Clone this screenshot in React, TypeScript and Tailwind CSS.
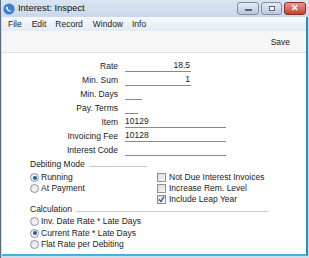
import React from "react";

const font = { fontFamily: '"Liberation Sans", Arial, sans-serif' };

function Radio({ checked }: { checked?: boolean }) {
  return (
    <span className="relative inline-block w-[9px] h-[9px] rounded-full border border-[#8e8f8f] bg-gradient-to-br from-[#e8e8e8] to-[#f8f8f8] shrink-0">
      {checked && (
        <span className="absolute left-[1.5px] top-[1.5px] w-[4px] h-[4px] rounded-full bg-[#1d5fa8]" />
      )}
    </span>
  );
}

function Check({ checked }: { checked?: boolean }) {
  return (
    <span className="relative inline-block w-[9px] h-[9px] border border-[#8e8f8f] bg-gradient-to-br from-[#dcdcdc] to-[#f6f6f6] shrink-0">
      {checked && (
        <svg className="absolute left-0 top-0" width="7" height="7" viewBox="0 0 7 7">
          <path d="M1 3.5 L3 5.5 L6 0.5" stroke="#2a4d8a" strokeWidth="1.3" fill="none" />
        </svg>
      )}
    </span>
  );
}

function Row({ label, width, value, align }: { label: string; width: number; value?: string; align?: "left" | "right" }) {
  return (
    <div className="flex items-end h-[14px]">
      <div className="w-[116px] text-right pr-0 leading-[12px]">{label}</div>
      <div className="ml-[7px] border-b border-[#8a8a8a] h-[13px] leading-[12px] flex items-end" style={{ width }}>
        <span className={"w-full " + (align === "right" ? "text-right pr-[1px]" : "text-left")}>{value}</span>
      </div>
    </div>
  );
}

export default function App() {
  return (
    <div className="w-[309px] h-[258px] bg-[#3b4656] overflow-hidden text-[8.5px] text-[#1a1a1a]" style={font}>
      <div className="w-[309px] h-[258px] flex flex-col border-l border-[#5b6b7e] bg-[#cfdceb]">
        {/* Title bar */}
        <div className="h-[17px] flex items-center bg-gradient-to-b from-[#dbe5f1] to-[#c9d8ea] relative">
          <svg className="ml-[2px]" width="12" height="12" viewBox="0 0 12 12">
            <circle cx="6" cy="6" r="5.6" fill="#3c7fcf" />
            <path d="M3 4 C3 8 7 10 9.5 7.5 C7.5 8.5 4.5 7.5 4.5 3.5 Z" fill="#ffffff" />
          </svg>
          <span className="ml-[3px] text-[9.4px] text-[#111]">Interest: Inspect</span>
          <div className="absolute right-[3px] top-[2px] flex gap-[2px]">
            <div className="w-[22px] h-[13px] rounded-[3px] border border-[#7d8ea5] bg-gradient-to-b from-[#e3ebf5] to-[#b8c9de] flex items-center justify-center">
              <span className="block w-[7px] h-[2px] bg-white border border-[#55627a] mt-[3px]" />
            </div>
            <div className="w-[21px] h-[13px] rounded-[3px] border border-[#7d8ea5] bg-gradient-to-b from-[#e3ebf5] to-[#b8c9de] flex items-center justify-center">
              <span className="block w-[6px] h-[5px] border border-[#55627a] bg-white" />
            </div>
            <div className="w-[22px] h-[13px] rounded-[3px] border border-[#8a3127] bg-gradient-to-b from-[#e79a8a] to-[#c3402c] flex items-center justify-center">
              <span className="text-white font-bold text-[9px] leading-none">✕</span>
            </div>
          </div>
        </div>
        <div className="flex-1 flex mx-[1px] mb-[2px] border-r-2 border-[#1e8fd0] border-b-2 border-b-[#3fb5dc]">
          <div className="flex-1 flex flex-col bg-white">
            {/* Menu bar */}
            <div className="h-[14px] flex items-center bg-gradient-to-b from-[#f7f9fc] to-[#e4ebf4] gap-0">
              <span className="ml-[6px]">File</span>
              <span className="ml-[10px]">Edit</span>
              <span className="ml-[9px]">Record</span>
              <span className="ml-[10px]">Window</span>
              <span className="ml-[9px]">Info</span>
            </div>
            {/* Toolbar */}
            <div className="h-[22px] flex items-center justify-end bg-[#f6f6f6] border-b border-[#dedede]">
              <span className="mr-[16px] mt-[2px]">Save</span>
            </div>
            {/* Form */}
            <div className="flex flex-col pt-[5px]">
              <Row label="Rate" width={66} value="18.5" align="right" />
              <Row label="Min. Sum" width={66} value="1" align="right" />
              <Row label="Min. Days" width={17} />
              <Row label="Pay. Terms" width={13} />
              <Row label="Item" width={101} value="10129" />
              <Row label="Invoicing Fee" width={101} value="10128" />
              <Row label="Interest Code" width={101} />
            </div>
            <div className="flex mt-[2px]">
              <div className="flex flex-col ml-[28px] w-[117px]">
                <div className="flex items-end h-[12px]">
                  <span className="leading-[12px]">Debiting Mode</span>
                  <span className="flex-1 ml-[4px] border-b border-[#c8c8c8] mb-[3px]" />
                </div>
                <div className="flex items-center h-[11px] mt-[2px] gap-[2px]">
                  <Radio checked />
                  <span>Running</span>
                </div>
                <div className="flex items-center h-[11px] gap-[2px]">
                  <Radio />
                  <span>At Payment</span>
                </div>
              </div>
              <div className="flex flex-col ml-[10px] mt-[14px]">
                <div className="flex items-center h-[11px] gap-[3px]">
                  <Check />
                  <span>Not Due Interest Invoices</span>
                </div>
                <div className="flex items-center h-[11px] gap-[3px]">
                  <Check />
                  <span>Increase Rem. Level</span>
                </div>
                <div className="flex items-center h-[11px] gap-[3px]">
                  <Check checked />
                  <span>Include Leap Year</span>
                </div>
              </div>
            </div>
            <div className="flex flex-col ml-[28px] mt-[-2px] w-[238px]">
              <div className="flex items-end h-[12px]">
                <span className="leading-[12px]">Calculation</span>
                <span className="flex-1 ml-[4px] border-b border-[#c8c8c8] mb-[3px]" />
              </div>
              <div className="flex items-center h-[11.5px] mt-[1px] gap-[2px]">
                <Radio />
                <span>Inv. Date Rate * Late Days</span>
              </div>
              <div className="flex items-center h-[11.5px] gap-[2px]">
                <Radio checked />
                <span>Current Rate * Late Days</span>
              </div>
              <div className="flex items-center h-[11.5px] gap-[2px]">
                <Radio />
                <span>Flat Rate per Debiting</span>
              </div>
            </div>
          </div>
        </div>
      </div>
    </div>
  );
}
